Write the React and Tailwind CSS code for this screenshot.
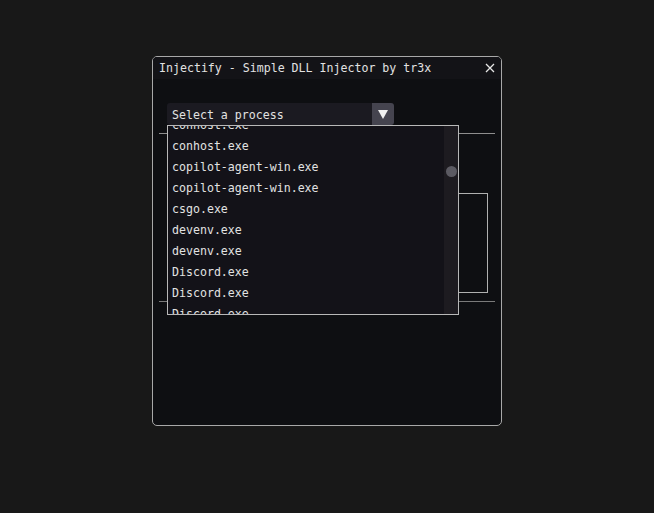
import React from 'react';

const processes = [
    'conhost.exe',
    'conhost.exe',
    'copilot-agent-win.exe',
    'copilot-agent-win.exe',
    'csgo.exe',
    'devenv.exe',
    'devenv.exe',
    'Discord.exe',
    'Discord.exe',
    'Discord.exe',
];

const mono = { fontFamily: '"DejaVu Sans Mono", "Liberation Mono", monospace' };

function CloseIcon() {
    return (
        <svg width="10" height="10" viewBox="0 0 10 10" className="block">
            <path d="M1 1 L9 9 M9 1 L1 9" stroke="#e6e6e6" strokeWidth="1.3" />
        </svg>
    );
}

function ProcessCombo() {
    return (
        <div className="relative w-[227px]">
            <div className="flex h-[22px]">
                <div className="flex-1 flex items-center pl-[5px] pt-[3px] bg-[#1b1a21] rounded-l-[3px] text-[#e2e2e2]">
                    Select a process
                </div>
                <div className="w-[22px] flex items-center justify-center bg-[#45444f] rounded-r-[3px]">
                    <svg width="10" height="9" viewBox="0 0 10 9">
                        <path d="M0 0 H10 L5 9 Z" fill="#f0f0f0" />
                    </svg>
                </div>
            </div>

            {/* open dropdown list, scrolled a little past the top */}
            <div className="absolute left-0 top-[22px] z-10 w-[292px] h-[190px] border border-[#b8b8b8] bg-[#131218] flex">
                <div className="flex-1 overflow-hidden">
                    <ul className="-mt-[11px] pl-[4px] text-[#e2e2e2]">
                        {processes.map((name, i) => (
                            <li key={i} className="h-[21px] flex items-center whitespace-nowrap">{name}</li>
                        ))}
                    </ul>
                </div>
                <div className="w-[14px] bg-[#1d1b20] pt-[40px] flex justify-center">
                    <div className="w-[11px] h-[11px] rounded-full bg-[#5b5a62]" />
                </div>
            </div>
        </div>
    );
}

export default function App() {
    return (
        <div className="min-h-[513px] bg-[#181818] pt-[56px] pl-[152px] text-[11.6px] leading-none" style={mono}>
            <div className="w-[350px] h-[370px] border border-[#a8a8a8] rounded-[5px] bg-[#0e0f12] overflow-hidden">
                <div className="h-[22px] bg-[#131317] flex items-center justify-between pl-[6px] pr-[6px]">
                    <span className="text-[#e2e2e2] whitespace-nowrap pt-[2px]">Injectify - Simple DLL Injector by tr3x</span>
                    <CloseIcon />
                </div>

                <div className="pt-[24px]">
                    <div className="pl-[14px]">
                        <ProcessCombo />
                    </div>

                    <div className="mt-[8px] mx-[6px] h-px bg-[#8e8e8e]" />

                    <div className="mt-[59px] ml-[14px] mr-[13px] h-[100px] border border-[#b0b0b0]" />

                    <div className="mt-[8px] mx-[6px] h-px bg-[#7a7a7a]" />
                </div>
            </div>
        </div>
    );
}
